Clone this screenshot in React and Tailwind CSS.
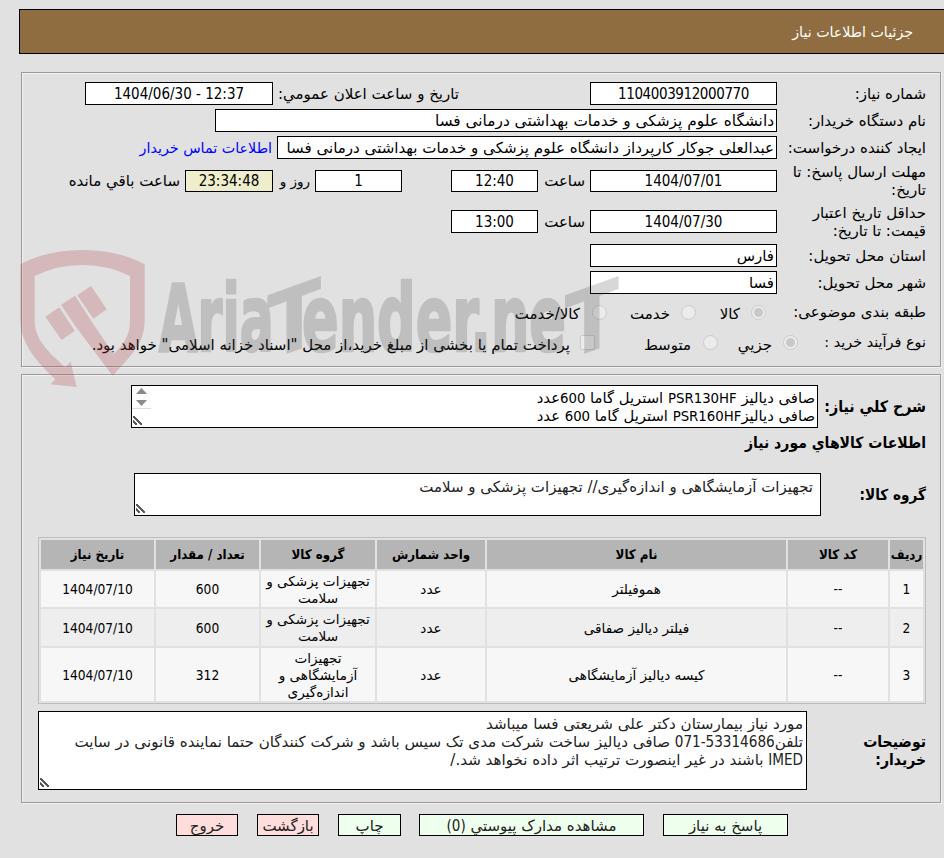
import React from 'react';

const columns = ['ردیف', 'کد کالا', 'نام کالا', 'واحد شمارش', 'گروه کالا', 'تعداد / مقدار', 'تاریخ نیاز'];

const rows = [
  { height: 'h-[36px]', bg: 'bg-[#f7f7f7]', cells: ['1', '--', 'هموفیلتر', 'عدد', 'تجهیزات پزشکی و سلامت', '600', '1404/07/10'] },
  { height: 'h-[37px]', bg: 'bg-[#eeeeee]', cells: ['2', '--', 'فیلتر دیالیز صفاقی', 'عدد', 'تجهیزات پزشکی و سلامت', '600', '1404/07/10'] },
  { height: 'h-[53px]', bg: 'bg-[#f7f7f7]', cells: ['3', '--', 'کیسه دیالیز آزمایشگاهی', 'عدد', 'تجهیزات آزمایشگاهی و اندازه‌گیری', '312', '1404/07/10'] },
];

const buttons = [
  { text: 'پاسخ به نیاز', style: 'w-[125px] bg-[#eeffee]' },
  { text: <>مشاهده مدارک پیوستي <Num>(0)</Num></>, style: 'w-[225px] bg-[#eeffee]' },
  { text: 'چاپ', style: 'w-[63px] -mr-px bg-[#eeffee]' },
  { text: 'بازگشت', style: 'w-[62px] bg-[#ffdddd]' },
  { text: 'خروج', style: 'w-[62px] bg-[#ffdddd]' },
];

function Num({ children }) {
  return <bdi dir="ltr" className="font-['DejaVu_Sans_Condensed']">{children}</bdi>;
}

function Row({ className, label, children }) {
  return (
    <div className={`flex items-center ${className}`}>
      <div className="w-[149px] shrink-0 leading-[18px]">{label}</div>
      {children}
    </div>
  );
}

function Field({ className = 'w-[187px]', children }) {
  return (
    <div className={`flex h-[23px] shrink-0 items-center border border-black bg-white px-[2px] whitespace-nowrap ${className}`}>
      {children}
    </div>
  );
}

function NumField({ className = 'h-[23px] w-[187px] bg-white', children }) {
  return (
    <div className={`flex shrink-0 items-center justify-center border border-black ${className}`}>
      <Num>{children}</Num>
    </div>
  );
}

function Radio({ checked }) {
  return (
    <span className="flex size-[15px] shrink-0 items-center justify-center rounded-full border border-[#cbcbcb] bg-[#ececec]">
      {checked && <span className="size-[9px] rounded-full bg-[#c8c8c8]" />}
    </span>
  );
}

function Grip() {
  return (
    <svg className="absolute bottom-[2px] left-[1px]" width="9" height="9" viewBox="0 0 9 9" shapeRendering="crispEdges">
      <path d="M0 0L9 9M0 5L4 9" stroke="#5a5a5a" strokeWidth="1.6" fill="none" />
    </svg>
  );
}

function Watermark() {
  return (
    <svg className="pointer-events-none absolute top-[240px] left-[10px]" width="620" height="155" viewBox="0 0 1860 465">
      <g opacity="0.25" fill="#b14149">
        <path d="M31 73Q110 30 217 30Q325 30 404 73V240C404 310 365 345 308 407L203 268L240 238L311 342C345 310 360 285 360 240V108Q295 75 217 75Q140 75 74 108V240C74 300 115 335 166 382L182 365L200 441L122 433L136 418C80 365 31 310 31 240Z" />
        <path d="M153 195L195 167L244 243L203 268Z" />
        <path d="M106 230L148 202L194 272L155 300Z" />
        <path d="M202 166L243 138L290 208L250 236Z" />
      </g>
      <g opacity="0.2" fill="#3c3c3c" stroke="#3c3c3c" strokeWidth="8" strokeLinejoin="round" className="font-['DejaVu_Sans_Condensed'] font-bold" direction="ltr">
        <text x="446" y="332" fontSize="276" textLength="345" lengthAdjust="spacingAndGlyphs">Aria</text>
        <text transform="translate(853 333) skewY(-20)" x="-81" y="0" fontSize="268" textLength="162" strokeWidth="1" lengthAdjust="spacingAndGlyphs">T</text>
        <text x="876" y="332" fontSize="276" textLength="792" lengthAdjust="spacingAndGlyphs">ender.ne</text>
        <text transform="translate(1745 333) skewY(-20)" x="-81" y="0" fontSize="268" textLength="162" strokeWidth="1" lengthAdjust="spacingAndGlyphs">T</text>
      </g>
    </svg>
  );
}

const App = () => {
  return (
    <div dir="rtl" className="relative h-[858px] w-[944px] overflow-hidden bg-[#e1e1e1] pt-[9px] font-['DejaVu_Sans'] text-[15px] leading-[18px] text-black">
      <div className="ml-[19px] flex h-[45px] items-center border-y border-l border-black bg-[#8f6d40] pr-[31px] text-[14.2px] text-white">
        جزئیات اطلاعات نیاز
      </div>

      <div className="mt-[18px] mr-[3px] ml-[21px] h-[295px] border border-[#9a9a9a] pt-[9px] pr-[14px] whitespace-nowrap shadow-[1px_1px_0_#f2f2f2,inset_1px_1px_0_#f2f2f2]">
        <Row className="h-[23px]" label="شماره نیاز:">
          <NumField className="h-[23px] w-[187px] bg-white tracking-[-0.4px]">1104003912000770</NumField>
          <span className="mr-[131px] w-[186px]">تاریخ و ساعت اعلان عمومي:</span>
          <NumField className="h-[23px] w-[188px] bg-white">1404/06/30 - 12:37</NumField>
        </Row>
        <Row className="mt-[4px] h-[23px]" label="نام دستگاه خریدار:">
          <Field className="w-[562px] text-[15.35px]">دانشگاه علوم پزشکی و خدمات بهداشتی درمانی فسا</Field>
        </Row>
        <Row className="mt-[4px] h-[23px]" label="ایجاد کننده درخواست:">
          <Field className="w-[500px] text-[15.05px]">عبدالعلی جوکار کارپرداز دانشگاه علوم پزشکی و خدمات بهداشتی درمانی فسا</Field>
          <span className="mr-[5px] text-[14.3px] text-[#0000ff]">اطلاعات تماس خریدار</span>
        </Row>
        <Row className="mt-[4px] h-[36px]" label={<>مهلت ارسال پاسخ: تا<br />تاریخ:</>}>
          <NumField className="h-[22px] w-[187px] bg-white">1404/07/01</NumField>
          <span className="mr-[5px] w-[47px]">ساعت</span>
          <NumField className="h-[22px] w-[87px] bg-white">12:40</NumField>
          <NumField className="mr-[49px] h-[22px] w-[87px] bg-white">1</NumField>
          <span className="mr-[5px] w-[37px] text-[13.5px]">روز و</span>
          <NumField className="h-[22px] w-[88px] bg-[#eeeecc]">23:34:48</NumField>
          <span className="mr-[5px]">ساعت باقي مانده</span>
        </Row>
        <Row className="mt-[5px] h-[35px]" label={<>حداقل تاریخ اعتبار<br />قیمت: تا تاریخ:</>}>
          <NumField>1404/07/30</NumField>
          <span className="mr-[5px] w-[47px]">ساعت</span>
          <NumField className="h-[23px] w-[87px] bg-white">13:00</NumField>
        </Row>
        <Row className="mt-[5px] h-[23px]" label="استان محل تحویل:">
          <Field>فارس</Field>
        </Row>
        <Row className="mt-[4px] h-[23px]" label="شهر محل تحویل:">
          <Field>فسا</Field>
        </Row>
        <div className="mt-[7px] flex h-[22px] items-center">
          <span className="w-[160px]">طبقه بندی موضوعی:</span>
          <Radio checked />
          <span className="mr-[11px] w-[44px] pt-[4px]">کالا</span>
          <Radio />
          <span className="mr-[11px] w-[63px] pt-[4px]">خدمت</span>
          <Radio />
          <span className="mr-[12px] pt-[4px]">کالا/خدمت</span>
        </div>
        <div className="mt-[8px] flex h-[22px] items-center">
          <span className="w-[128px] text-[14.4px]">نوع فرآیند خرید :</span>
          <Radio checked />
          <span className="mr-[11px] w-[54px] pt-[5px]">جزیي</span>
          <Radio />
          <span className="mr-[12px] w-[96px] pt-[5px]">متوسط</span>
          <span className="size-[15px] rounded-[2px] border border-[#cbcbcb] bg-[#ececec]" />
          <span className="mr-[10px] pt-[5px]">پرداخت تمام یا بخشی از مبلغ خرید،از محل "اسناد خزانه اسلامی" خواهد بود.</span>
        </div>
      </div>

      <div className="mt-[7px] mr-[3px] ml-[21px] h-[429px] border border-[#9a9a9a] pt-[10px] pr-[14px] shadow-[1px_1px_0_#f2f2f2,inset_1px_1px_0_#f2f2f2]">
        <div className="flex h-[43px] items-center">
          <span className="w-[108px] font-['DejaVu_Sans_Condensed'] text-[15.8px] font-bold whitespace-nowrap">شرح كلي نياز:</span>
          <div className="relative h-[43px] w-[687px] border border-black bg-white pt-[3px] pr-[2px] text-[14.8px]">
            صافی دیالیز <Num>PSR130HF</Num> استریل گاما <Num>600</Num>عدد<br />
            صافی دیالیز<Num>PSR160HF</Num> استریل گاما <Num>600</Num> عدد
            <div className="absolute top-0 left-0 flex h-[23px] w-[19px] flex-col items-center justify-between border-b border-[#dcdcdc] bg-[#fcfcfc] pt-[2px] pb-[2px]">
              <svg width="11" height="6" viewBox="0 0 11 6"><path d="M5.5 0L11 6H0Z" fill="#8a8a8a" /></svg>
              <svg width="11" height="6" viewBox="0 0 11 6"><path d="M5.5 6L11 0H0Z" fill="#8a8a8a" /></svg>
            </div>
            <Grip />
          </div>
        </div>
        <div className="mt-[6px] h-[18px] font-['DejaVu_Sans_Condensed'] text-[15.6px] font-bold">اطلاعات كالاهاي مورد نياز</div>
        <div className="mt-[21px] flex h-[43px] items-center">
          <span className="w-[105px] font-['DejaVu_Sans_Condensed'] text-[15.2px] font-bold">گروه کالا:</span>
          <div className="relative h-[43px] w-[687px] border border-black bg-white pt-[4px] pr-[7px] text-[#222]">
            تجهیزات آزمایشگاهی و اندازه‌گیری// تجهیزات پزشکی و سلامت
            <Grip />
          </div>
        </div>

        <div className="mt-[21px] flex w-[888px] flex-col gap-[2px] border border-[#bdbdbd] p-[2px] text-center text-[13.6px] leading-[17px]">
          <div className="grid h-[29px] grid-cols-[33px_100px_299px_108px_114px_103px_113px] gap-[2px] font-['DejaVu_Sans_Condensed'] text-[13.2px] font-bold">
            {columns.map((col) => (
              <div key={col} className="flex items-center justify-center bg-[#b5b5b5] whitespace-nowrap">{col}</div>
            ))}
          </div>
          {rows.map((row, index) => (
            <div key={index} className={`grid grid-cols-[33px_100px_299px_108px_114px_103px_113px] gap-[2px] ${row.height}`}>
              {row.cells.map((cell, i) => (
                <div key={i} className={`flex items-center justify-center px-[3px] pt-px ${row.bg}`}>
                  {/[0-9-]/.test(cell) ? <Num>{cell}</Num> : cell}
                </div>
              ))}
            </div>
          ))}
        </div>

        <div className="mt-[7px] flex h-[79px] items-center">
          <div className="w-[119px] font-['DejaVu_Sans_Condensed'] text-[15.6px] font-bold">توضیحات<br />خریدار:</div>
          <div className="relative h-[79px] w-[769px] border border-black bg-white pt-[3px] pr-[3px] text-[15.1px] whitespace-nowrap text-[#222]">
            مورد نیاز بیمارستان دکتر علی شریعتی فسا میباشد<br />
            تلفن<Num>071-53314686</Num> صافی دیالیز ساخت شرکت مدی تک سیس باشد و شرکت کنندگان حتما نماینده قانونی در سایت<br />
            <Num>IMED</Num> باشند در غیر اینصورت ترتیب اثر داده نخواهد شد./
            <Grip />
          </div>
        </div>
      </div>

      <div className="mt-[11px] flex gap-[19px] pr-[156px]">
        {buttons.map((btn, index) => (
          <button key={index} className={`flex h-[22px] shrink-0 items-center justify-center border border-black pt-[2px] whitespace-nowrap text-[#222] ${btn.style}`}>
            <span>{btn.text}</span>
          </button>
        ))}
      </div>

      <Watermark />
    </div>
  );
};

export default App;
